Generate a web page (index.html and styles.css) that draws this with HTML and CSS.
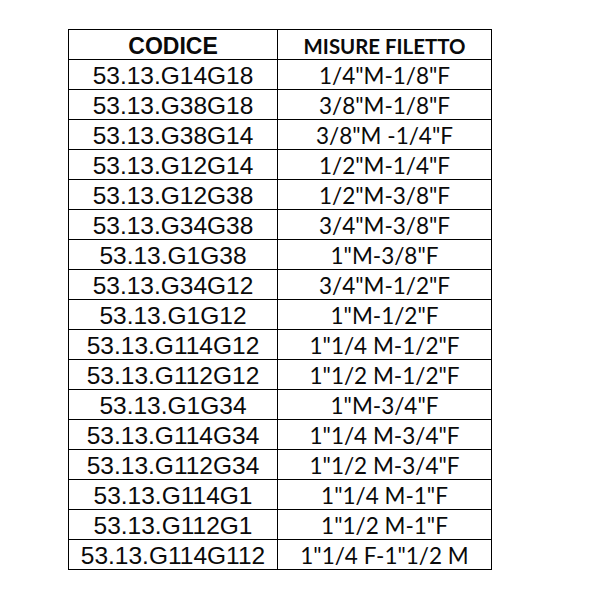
FILE: index.html
```html
<!DOCTYPE html>
<html lang="it">
<head>
<meta charset="utf-8">
<title>Codici e misure filetto</title>
<link rel="stylesheet" href="styles.css">
</head>
<body>
<table class="codes">
  <thead>
    <tr><th class="c1">CODICE</th><th class="c2">MISURE FILETTO</th></tr>
  </thead>
  <tbody>
    <tr><td class="c1">53.13.G14G18</td><td class="c2">1/4"M-1/8"F</td></tr>
    <tr><td class="c1">53.13.G38G18</td><td class="c2">3/8"M-1/8"F</td></tr>
    <tr><td class="c1">53.13.G38G14</td><td class="c2">3/8"M -1/4"F</td></tr>
    <tr><td class="c1">53.13.G12G14</td><td class="c2">1/2"M-1/4"F</td></tr>
    <tr><td class="c1">53.13.G12G38</td><td class="c2">1/2"M-3/8"F</td></tr>
    <tr><td class="c1">53.13.G34G38</td><td class="c2">3/4"M-3/8"F</td></tr>
    <tr><td class="c1">53.13.G1G38</td><td class="c2">1"M-3/8"F</td></tr>
    <tr><td class="c1">53.13.G34G12</td><td class="c2">3/4"M-1/2"F</td></tr>
    <tr><td class="c1">53.13.G1G12</td><td class="c2">1"M-1/2"F</td></tr>
    <tr><td class="c1">53.13.G114G12</td><td class="c2">1"1/4 M-1/2"F</td></tr>
    <tr><td class="c1">53.13.G112G12</td><td class="c2">1"1/2 M-1/2"F</td></tr>
    <tr><td class="c1">53.13.G1G34</td><td class="c2">1"M-3/4"F</td></tr>
    <tr><td class="c1">53.13.G114G34</td><td class="c2">1"1/4 M-3/4"F</td></tr>
    <tr><td class="c1">53.13.G112G34</td><td class="c2">1"1/2 M-3/4"F</td></tr>
    <tr><td class="c1">53.13.G114G1</td><td class="c2">1"1/4 M-1"F</td></tr>
    <tr><td class="c1">53.13.G112G1</td><td class="c2">1"1/2 M-1"F</td></tr>
    <tr><td class="c1">53.13.G114G112</td><td class="c2">1"1/4 F-1"1/2 M</td></tr>
  </tbody>
</table>
</body>
</html>
```
FILE: styles.css
```css
html, body {
  margin: 0;
  padding: 0;
  background: #fff;
}

.codes {
  margin: 29px 0 0 68px;
  border-collapse: collapse;
  width: 424px;
  table-layout: fixed;
  color: #0a0a0a;
}

.codes tr {
  height: 30px;
}

.codes th,
.codes td {
  border: 1px solid #000;
  padding: 3px 0 0 0;
  height: 26px;
  line-height: 26px;
  text-align: center;
  vertical-align: middle;
  white-space: nowrap;
  overflow: hidden;
}

.codes .c1 {
  width: 208px;
  font-family: "Liberation Sans", Arial, sans-serif;
  font-size: 24.5px;
}

.codes .c2 {
  font-family: Lato, "Liberation Sans", sans-serif;
  font-size: 22.5px;
}

.codes th.c1 {
  font-weight: bold;
  font-size: 23px;
}

.codes th.c2 {
  font-weight: bold;
  font-size: 20.4px;
}
```
